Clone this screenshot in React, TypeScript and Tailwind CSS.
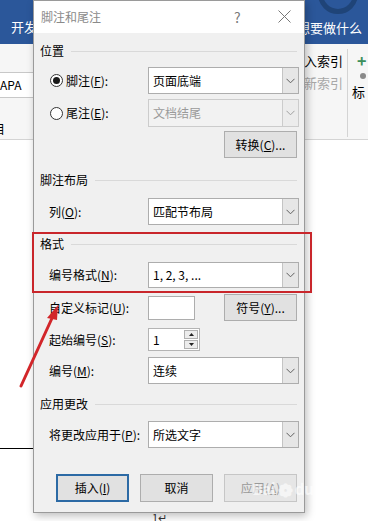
import React from "react";

const font = { fontFamily: '"Noto Sans CJK SC", "Microsoft YaHei", sans-serif' };

function Chevron({ color = "#606060" }: { color?: string }) {
  return (
    <svg width="9" height="6" viewBox="0 0 9 6">
      <path d="M0.5 0.8 L4.5 4.8 L8.5 0.8" fill="none" stroke={color} strokeWidth="1" />
    </svg>
  );
}

function Dropdown({ text, disabled = false }: { text: string; disabled?: boolean }) {
  return (
    <div
      className={`flex h-full w-[151px] border ${
        disabled ? "border-[#cccccc] bg-[#f2f2f2]" : "border-[#adadad] bg-white"
      }`}
    >
      <div className={`flex flex-1 items-center pl-[4px] text-[12px] ${disabled ? "text-[#9a9a9a]" : "text-black"}`}>
        {text}
      </div>
      <div
        className={`flex w-[16px] items-center justify-center border-l ${
          disabled ? "border-[#cccccc] bg-[#ececec]" : "border-[#c4c4c4] bg-[#e6e6e6]"
        }`}
      >
        <Chevron color={disabled ? "#a0a0a0" : "#606060"} />
      </div>
    </div>
  );
}

function Section({ title }: { title: string }) {
  return (
    <div className="flex h-[16px] items-center gap-[7px] pl-[6px] pr-[7px]">
      <span className="text-[12px] leading-none text-black">{title}</span>
      <div className="h-px flex-1 bg-[#d9d9d9]" />
    </div>
  );
}

function Btn({ children, variant = "normal" }: { children: React.ReactNode; variant?: "normal" | "focus" | "disabled" }) {
  const cls =
    variant === "focus"
      ? "border-2 border-[#2c6aa5] bg-[#e1e1e1] text-black"
      : variant === "disabled"
      ? "border border-[#c6c6c6] bg-[#e6e6e6] text-[#9a9a9a]"
      : "border border-[#adadad] bg-[#e1e1e1] text-black";
  return (
    <div className={`flex h-full w-[73px] items-center justify-center text-[12px] ${cls}`}>{children}</div>
  );
}

function Row({ label, children }: { label: React.ReactNode; children: React.ReactNode }) {
  return (
    <div className="flex h-full items-center">
      <div className="w-[114px] pl-[15px] text-[12px] text-black">{label}</div>
      {children}
    </div>
  );
}

function Radio({ checked }: { checked?: boolean }) {
  return (
    <div className="flex h-[13px] w-[13px] items-center justify-center rounded-full border border-[#333333] bg-white">
      {checked && <div className="h-[7px] w-[7px] rounded-full bg-[#1a1a1a]" />}
    </div>
  );
}

export default function App() {
  return (
    <div className="relative h-[521px] w-[368px] overflow-hidden bg-white" style={font}>
      {/* Word background */}
      <div className="flex h-[44px] items-center justify-between bg-[#2b579a] pl-[11px] pr-[6px] text-[13px] text-white">
        <span className="mt-[10px]">开发</span>
        <span className="mt-[12px]">想要做什么</span>
      </div>
      <div className="relative h-[96px] border-b border-[#d4d4d4] bg-[#f6f6f6]">
        <div className="absolute left-0 top-[28px] flex h-[26px] w-[33px] items-center border-y border-[#c8c8c8] bg-white text-[12px] text-black">
          APA
        </div>
        <div className="absolute left-[-7px] top-[76px] text-[12px] text-black">目</div>
        <div className="absolute left-[304px] top-[7px] text-[13px] text-black">入索引</div>
        <div className="absolute left-[304px] top-[29px] text-[13px] text-[#a8a8a8]">新索引</div>
        <div className="absolute left-[347px] top-[5px] h-[88px] w-px bg-[#d4d4d4]" />
        <div className="absolute left-[357px] top-[8px] text-[16px] font-bold leading-none text-[#3c8f5a]">+</div>
        <div className="absolute left-[360px] top-[29px] h-[6px] w-[6px] rounded-full bg-[#8a8a8a]" />
        <div className="absolute left-[352px] top-[38px] text-[13px] text-black">标</div>
      </div>
      <div className="absolute left-[318px] top-[-26px] h-[40px] w-[40px] rounded-full border-[5px] border-[#1f4478]" />
      <div className="absolute left-0 top-[448px] h-px w-[40px] bg-black" />
      <div className="absolute left-[152px] top-[509px] text-[11px] text-[#333333]">1↵</div>

      {/* Dialog */}
      <div className="absolute left-[33px] top-0 flex w-[272px] flex-col border border-[#9a9a9a] bg-[#f0f0f0] pb-[10px] shadow-[2px_3px_8px_rgba(0,0,0,0.25)]">
        <div className="relative flex h-[32px] items-center bg-white pl-[7px]">
          <span className="text-[12px] text-[#8a8a8a]">脚注和尾注</span>
          <span className="absolute left-[200px] top-[6px] text-[14px] text-[#7a7a7a]">?</span>
          <svg className="absolute left-[244px] top-[9px]" width="13" height="13" viewBox="0 0 13 13">
            <path d="M0.5 0.5 L12.5 12.5 M12.5 0.5 L0.5 12.5" stroke="#777777" strokeWidth="1" />
          </svg>
        </div>

        <div className="mt-[10px]">
          <Section title="位置" />
        </div>
        <div className="mt-[8px] h-[27px]">
          <div className="flex h-full items-center">
            <div className="flex w-[114px] items-center gap-[3px] pl-[16px] text-[12px] text-black">
              <Radio checked />
              <span>
                脚注(<u>F</u>):
              </span>
            </div>
            <Dropdown text="页面底端" />
          </div>
        </div>
        <div className="mt-[5px] h-[28px]">
          <div className="flex h-full items-center">
            <div className="flex w-[114px] items-center gap-[3px] pl-[16px] text-[12px] text-black">
              <Radio />
              <span>
                尾注(<u>E</u>):
              </span>
            </div>
            <Dropdown text="文档结尾" disabled />
          </div>
        </div>
        <div className="mt-[4px] flex h-[27px] justify-end pr-[7px]">
          <Btn>
            转换(<u>C</u>)...
          </Btn>
        </div>

        <div className="mt-[14px]">
          <Section title="脚注布局" />
        </div>
        <div className="mt-[10px] h-[27px]">
          <Row
            label={
              <span>
                列(<u>O</u>):
              </span>
            }
          >
            <Dropdown text="匹配节布局" />
          </Row>
        </div>

        <div className="mt-[11px]">
          <Section title="格式" />
        </div>
        <div className="mt-[10px] h-[26px]">
          <Row
            label={
              <span>
                编号格式(<u>N</u>):
              </span>
            }
          >
            <Dropdown text="1, 2, 3, ..." />
          </Row>
        </div>
        <div className="mt-[6px] h-[27px]">
          <div className="flex h-full items-center pr-[7px]">
            <div className="w-[114px] pl-[15px] text-[12px] text-black">
              自定义标记(<u>U</u>):
            </div>
            <div className="h-[24px] w-[47px] border border-[#adadad] bg-white" />
            <div className="flex-1" />
            <Btn>
              符号(<u>Y</u>)...
            </Btn>
          </div>
        </div>
        <div className="mt-[7px] h-[23px]">
          <Row
            label={
              <span>
                起始编号(<u>S</u>):
              </span>
            }
          >
            <div className="flex h-full w-[52px] items-center border border-[#b4b4b4] bg-white pl-[4px] pr-[1px]">
              <span className="flex-1 text-[12px] text-black">1</span>
              <div className="flex h-[19px] w-[14px] flex-col gap-px">
                <div className="flex flex-1 items-center justify-center border border-[#b0b0b0] bg-[#ececec]">
                  <svg width="5" height="3" viewBox="0 0 5 3">
                    <path d="M0 3 L2.5 0 L5 3 Z" fill="#222222" />
                  </svg>
                </div>
                <div className="flex flex-1 items-center justify-center border border-[#b0b0b0] bg-[#ececec]">
                  <svg width="5" height="3" viewBox="0 0 5 3">
                    <path d="M0 0 L2.5 3 L5 0 Z" fill="#222222" />
                  </svg>
                </div>
              </div>
            </div>
          </Row>
        </div>
        <div className="mt-[6px] h-[27px]">
          <Row
            label={
              <span>
                编号(<u>M</u>):
              </span>
            }
          >
            <Dropdown text="连续" />
          </Row>
        </div>

        <div className="mt-[12px]">
          <Section title="应用更改" />
        </div>
        <div className="mt-[9px] h-[27px]">
          <Row
            label={
              <span>
                将更改应用于(<u>P</u>):
              </span>
            }
          >
            <Dropdown text="所选文字" />
          </Row>
        </div>

        <div className="mt-[26px] flex h-[28px] items-center gap-[11px] pl-[22px]">
          <Btn variant="focus">
            插入(<u>I</u>)
          </Btn>
          <Btn>取消</Btn>
          <Btn variant="disabled">
            应用(<u>A</u>)
          </Btn>
        </div>
      </div>

      {/* Watermark */}
      <div className="pointer-events-none absolute left-[252px] top-[478px] flex items-center gap-[2px] text-[15px] font-bold text-white opacity-60">
        <span>Bai</span>
        <span className="text-[18px] leading-none">❁</span>
        <span>du 经验</span>
      </div>

      {/* Red highlight box */}
      <div className="absolute left-[32px] top-[232px] h-[61px] w-[280px] border-2 border-[#c9262b]" />

      {/* Red arrow */}
      <svg className="absolute left-0 top-0" width="368" height="521" viewBox="0 0 368 521">
        <line x1="21" y1="386" x2="53" y2="316" stroke="#d2262a" strokeWidth="3" strokeLinecap="round" />
        <path d="M58 305 L47 318 L57 320 Z" fill="#d2262a" />
      </svg>
    </div>
  );
}
